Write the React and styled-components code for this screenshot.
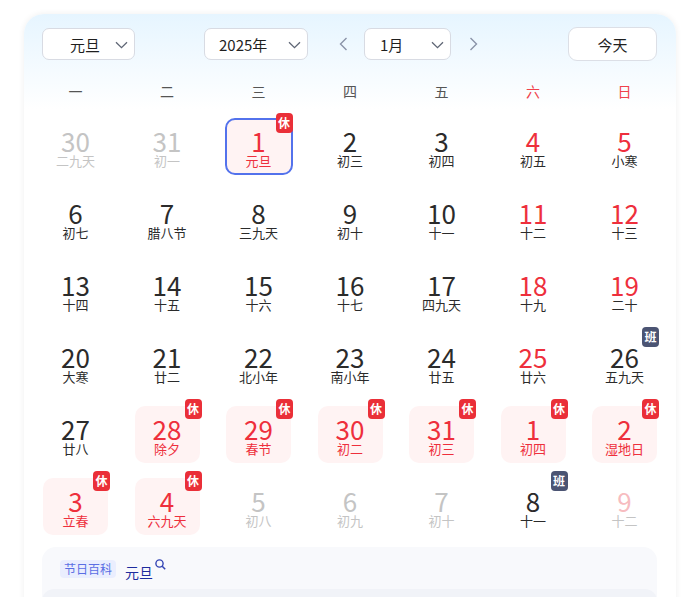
import React from "react";
import styled, { createGlobalStyle } from "styled-components";

const GlobalStyle = createGlobalStyle`
  body {
    margin: 0;
    background: #fff;
    font-family: "Noto Sans CJK SC", "Noto Sans", sans-serif;
  }
`;

// [日期, 农历, 类型, 角标, 选中]
const days = [
  ["30", "二九天", "other"],
  ["31", "初一", "other"],
  ["1", "元旦", "holiday", "休", true],
  ["2", "初三"],
  ["3", "初四"],
  ["4", "初五", "weekend"],
  ["5", "小寒", "weekend"],
  ["6", "初七"],
  ["7", "腊八节"],
  ["8", "三九天"],
  ["9", "初十"],
  ["10", "十一"],
  ["11", "十二", "weekend"],
  ["12", "十三", "weekend"],
  ["13", "十四"],
  ["14", "十五"],
  ["15", "十六"],
  ["16", "十七"],
  ["17", "四九天"],
  ["18", "十九", "weekend"],
  ["19", "二十", "weekend"],
  ["20", "大寒"],
  ["21", "廿二"],
  ["22", "北小年"],
  ["23", "南小年"],
  ["24", "廿五"],
  ["25", "廿六", "weekend"],
  ["26", "五九天", "", "班"],
  ["27", "廿八"],
  ["28", "除夕", "holiday", "休"],
  ["29", "春节", "holiday", "休"],
  ["30", "初二", "holiday", "休"],
  ["31", "初三", "holiday", "休"],
  ["1", "初四", "holiday", "休"],
  ["2", "湿地日", "holiday", "休"],
  ["3", "立春", "holiday", "休"],
  ["4", "六九天", "holiday", "休"],
  ["5", "初八", "other"],
  ["6", "初九", "other"],
  ["7", "初十", "other"],
  ["8", "十一", "", "班"],
  ["9", "十二", "otherWeekend"],
];

const weekdays = ["一", "二", "三", "四", "五", "六", "日"];

const numColor = {
  "": "#2b2b2b",
  weekend: "#ee2f3c",
  holiday: "#ee2f3c",
  other: "#c4c4c4",
  otherWeekend: "#f7bcc0",
};
const lunarColor = {
  "": "#2b2b2b",
  weekend: "#2b2b2b",
  holiday: "#ee2f3c",
  other: "#c4c4c4",
  otherWeekend: "#c4c4c4",
};

const Chevron = () => (
  <svg width="13" height="8" viewBox="0 0 13 8" fill="none">
    <path d="M1 1.2L6.5 6.6L12 1.2" stroke="#5f6675" strokeWidth="1.3" />
  </svg>
);

const Arrow = ({ dir }) => (
  <svg width="9" height="14" viewBox="0 0 9 14" fill="none">
    <path
      d={dir === "left" ? "M7.5 1L1.5 7L7.5 13" : "M1.5 1L7.5 7L1.5 13"}
      stroke="#8a93a8"
      strokeWidth="1.4"
    />
  </svg>
);

const SearchIcon = () => (
  <svg width="11" height="11" viewBox="0 0 11 11" fill="none">
    <circle cx="4.5" cy="4.5" r="3.6" stroke="#3344b4" strokeWidth="1.4" />
    <path d="M7.2 7.2L10.2 10.2" stroke="#3344b4" strokeWidth="1.5" />
  </svg>
);

const App = () => {
  return (
    <>
      <GlobalStyle />
      <Card>
        <Header>
          <Select width={93} padLeft={27}>
            <span>元旦</span>
            <Chevron />
          </Select>
          <MidGroup>
            <Select width={104} padLeft={14}>
              <span>2025年</span>
              <Chevron />
            </Select>
            <ArrowBtn gap={27}>
              <Arrow dir="left" />
            </ArrowBtn>
            <Select width={87} padLeft={15} gap={13}>
              <span>1月</span>
              <Chevron />
            </Select>
            <ArrowBtn gap={14}>
              <Arrow dir="right" />
            </ArrowBtn>
          </MidGroup>
          <TodayBtn>今天</TodayBtn>
        </Header>

        <WeekRow>
          {weekdays.map((w, i) => (
            <WeekLabel key={w} red={i >= 5}>
              {w}
            </WeekLabel>
          ))}
        </WeekRow>

        <DayGrid>
          {days.map(([num, lunar, kind = "", badge, selected], i) => (
            <DayCell key={i} holiday={kind === "holiday"} selected={selected}>
              <DayNum color={numColor[kind]}>{num}</DayNum>
              <Lunar color={lunarColor[kind]}>{lunar}</Lunar>
              {badge && <Badge work={badge === "班"}>{badge}</Badge>}
            </DayCell>
          ))}
        </DayGrid>

        <InfoPanel>
          <InfoRow>
            <Tag>节日百科</Tag>
            <FestName>元旦</FestName>
            <SearchMark>
              <SearchIcon />
            </SearchMark>
          </InfoRow>
          <InnerPanel />
        </InfoPanel>
      </Card>
    </>
  );
};

export default App;

const Card = styled.div`
  margin: 14px 0 0 24px;
  width: 652px;
  min-height: 620px;
  box-sizing: border-box;
  padding: 13px 19px 0 18px;
  border-radius: 20px 20px 0 0;
  background: linear-gradient(180deg, #e6f5ff 0, #ffffff 95px);
  box-shadow: 0 0 6px rgba(0, 0, 0, 0.07);
`;

const Header = styled.div`
  display: flex;
  align-items: center;
  height: 34px;
`;

const MidGroup = styled.div`
  display: flex;
  align-items: center;
  margin-left: 69px;
`;

const Select = styled.div`
  width: ${props => props.width}px;
  height: 32px;
  box-sizing: border-box;
  display: flex;
  align-items: center;
  justify-content: space-between;
  margin-left: ${props => props.gap || 0}px;
  padding: 0 6px 0 ${props => props.padLeft}px;
  background: #fff;
  border: 1px solid #d8dbe3;
  border-radius: 7px;
  font-size: 15px;
  color: #1f1f1f;
  svg {
    margin-top: 1px;
  }
`;

const ArrowBtn = styled.div`
  width: 16px;
  height: 20px;
  display: flex;
  align-items: center;
  justify-content: center;
  margin-left: ${props => props.gap}px;
`;

const TodayBtn = styled.div`
  margin-left: auto;
  width: 89px;
  height: 34px;
  box-sizing: border-box;
  display: flex;
  align-items: center;
  justify-content: center;
  background: #fff;
  border: 1px solid #dcdfe6;
  border-radius: 9px;
  font-size: 15px;
  color: #1f1f1f;
`;

const WeekRow = styled.div`
  display: grid;
  grid-template-columns: repeat(7, 1fr);
  column-gap: 26.5px;
  margin: 20px 0 0 1px;
`;

const WeekLabel = styled.div`
  height: 20px;
  line-height: 20px;
  text-align: center;
  font-size: 14px;
  color: ${props => (props.red ? "#f0424c" : "#555")};
`;

const DayGrid = styled.div`
  display: grid;
  grid-template-columns: repeat(7, 1fr);
  column-gap: 26.5px;
  row-gap: 15px;
  margin: 17px 0 0 1px;
`;

const DayCell = styled.div`
  position: relative;
  height: 57px;
  box-sizing: border-box;
  display: flex;
  flex-direction: column;
  align-items: center;
  padding-top: ${props => (props.selected ? 7.5 : 9.5)}px;
  border-radius: 10px;
  background: ${props => (props.holiday ? "#fff3f3" : "transparent")};
  border: ${props => (props.selected ? "2px solid #5372ec" : "none")};
  ${props => props.selected && "margin: 0 -1.5px;"}
`;

const DayNum = styled.div`
  font-size: 26px;
  line-height: 26px;
  color: ${props => props.color};
`;

const Lunar = styled.div`
  font-size: 13px;
  line-height: 13px;
  color: ${props => props.color};
  white-space: nowrap;
`;

const Badge = styled.div`
  position: absolute;
  top: -7px;
  right: -2px;
  width: 17px;
  height: 20px;
  border-radius: 4px;
  background: ${props => (props.work ? "#4b5473" : "#ea2f38")};
  color: #fff;
  font-size: 12px;
  font-weight: 700;
  line-height: 20px;
  text-align: center;
`;

const InfoPanel = styled.div`
  margin-top: 12px;
  background: #f8f9fc;
  border-radius: 14px 14px 0 0;
  padding: 13px 0 0;
`;

const InfoRow = styled.div`
  display: flex;
  align-items: flex-start;
  padding-left: 18px;
  height: 29px;
`;

const Tag = styled.div`
  height: 18px;
  line-height: 18px;
  padding: 0 4px;
  border-radius: 4px;
  background: #eaeefe;
  color: #5a6ee4;
  font-size: 12px;
`;

const FestName = styled.div`
  margin: 3px 0 0 9px;
  font-size: 14px;
  line-height: 18px;
  color: #1d2c9e;
`;

const SearchMark = styled.div`
  margin: -1px 0 0 2px;
  line-height: 0;
`;

const InnerPanel = styled.div`
  height: 40px;
  background: #f1f3f8;
  border-radius: 12px 12px 0 0;
`;
